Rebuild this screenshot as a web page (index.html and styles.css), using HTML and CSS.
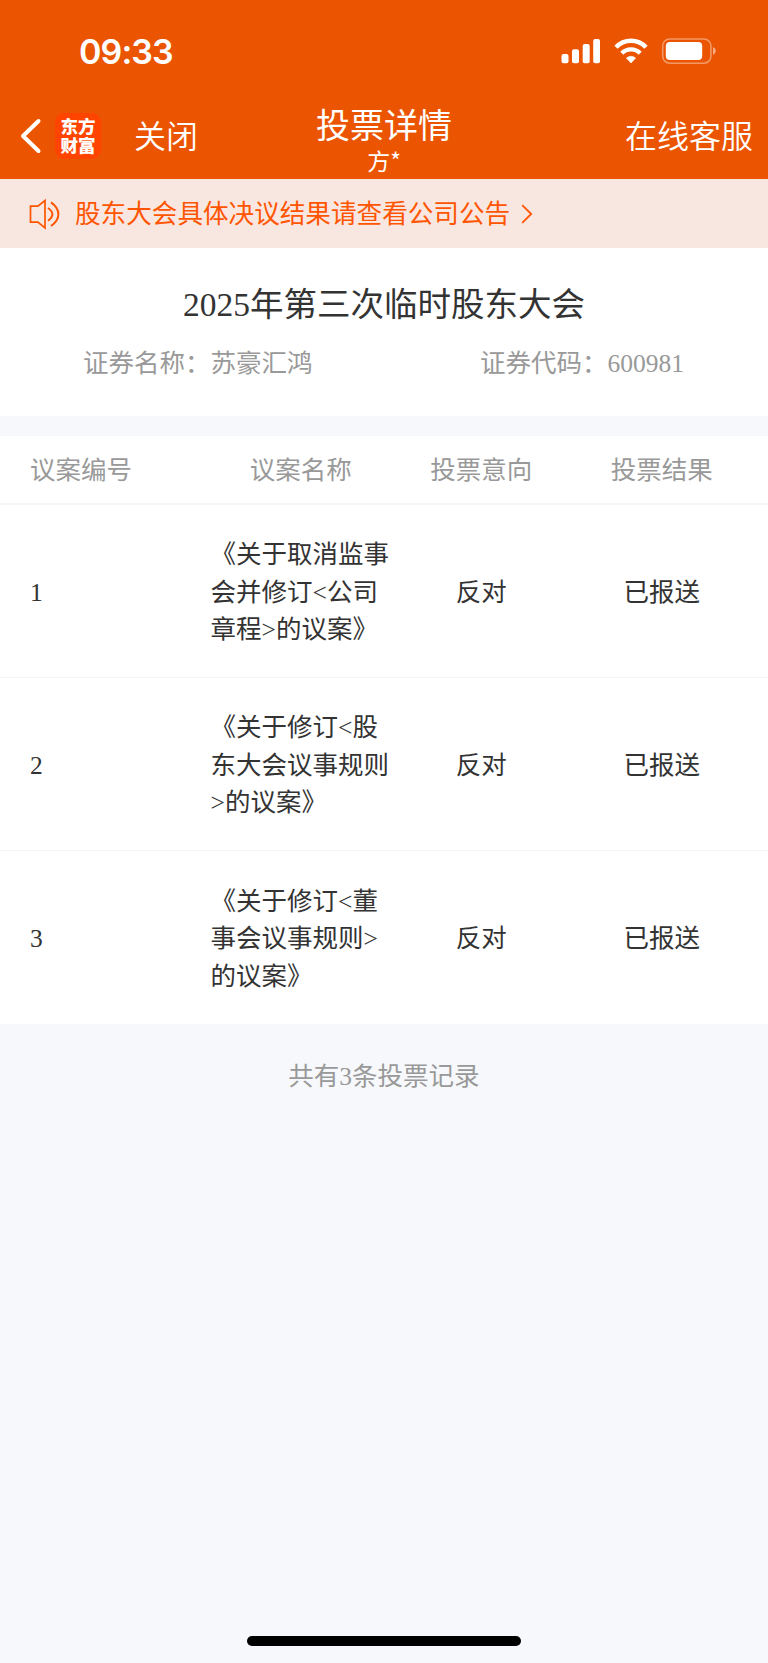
FILE: index.html
```html
<!DOCTYPE html>
<html lang="zh-CN">
<head>
<meta charset="utf-8">
<title>投票详情</title>
<link rel="stylesheet" href="styles.css">
</head>
<body>
<div class="screen">
  <header class="top">
    <div class="status">
      <span class="clock">09:33</span>
      <svg class="status-icons" width="156" height="28" viewBox="0 0 156 28">
        <g fill="#fff">
          <rect x="1.5" y="16" width="7" height="9.3" rx="2"/>
          <rect x="12" y="11.2" width="7" height="14.1" rx="2"/>
          <rect x="22.7" y="6" width="7" height="19.3" rx="2"/>
          <rect x="33.2" y="1" width="6.8" height="24.3" rx="2"/>
        </g>
        <g fill="none" stroke="#fff" stroke-width="4.4">
          <path d="M56 9.3A20.5 20.5 0 0 1 86 9.3"/>
          <path d="M61.8 15.3A12.8 12.8 0 0 1 80.2 15.3"/>
        </g>
        <path d="M66.4 20.1A6.8 6.8 0 0 1 75.6 20.1L71 25Z" fill="#fff" stroke="#fff" stroke-width=".6" stroke-linejoin="round"/>
        <rect x="102.7" y="1" width="48.2" height="24.2" rx="7" fill="none" stroke="#fff" stroke-opacity=".4" stroke-width="1.6"/>
        <rect x="105.8" y="4.1" width="36.4" height="18" rx="4" fill="#fff"/>
        <path d="M153 9Q155.8 10.2 155.8 13T153 17Z" fill="#fff" fill-opacity=".5"/>
      </svg>
    </div>
    <nav class="nav">
      <div class="nav-left">
        <svg class="back" width="22" height="36" viewBox="0 0 22 36"><path d="M18.5 3L3 18L18.5 33" fill="none" stroke="#fff" stroke-width="4" stroke-linecap="round" stroke-linejoin="round"/></svg>
        <div class="logo"><span>东方</span><span>财富</span></div>
        <span class="close">关闭</span>
      </div>
      <div class="nav-title"><h1>投票详情</h1><p>方*</p></div>
      <span class="service">在线客服</span>
    </nav>
  </header>

  <a class="notice">
    <svg class="speaker" width="32" height="32" viewBox="0 0 32 32"><g fill="none" stroke="#ff5500" stroke-width="1.7"><path d="M2.5 8.2H9.9L17 2.5V30L9.9 24.2H2.5Z"/><path d="M20 10Q24.4 13 24.4 16.2T20 22.7" stroke-width="2"/><path d="M23 4.4Q30.4 9.6 30.4 16.2T23 28" stroke-width="2"/></g></svg>
    <span>股东大会具体决议结果请查看公司公告</span>
    <svg class="more" width="12" height="20" viewBox="0 0 12 20"><path d="M1.2 1.2L10.2 10L1.2 18.8" fill="none" stroke="#ff5500" stroke-width="1.8"/></svg>
  </a>

  <section class="meeting">
    <h2>2025年第三次临时股东大会</h2>
    <div class="security"><span>证券名称：苏豪汇鸿</span><span>证券代码：600981</span></div>
  </section>

  <section class="votes">
    <div class="row head"><span class="no">议案编号</span><span>议案名称</span><span>投票意向</span><span>投票结果</span></div>
    <div class="row"><span class="no">1</span><span class="name">《关于取消监事<br>会并修订&lt;公司<br>章程&gt;的议案》</span><span>反对</span><span>已报送</span></div>
    <div class="row"><span class="no">2</span><span class="name">《关于修订&lt;股<br>东大会议事规则<br>&gt;的议案》</span><span>反对</span><span>已报送</span></div>
    <div class="row"><span class="no">3</span><span class="name">《关于修订&lt;董<br>事会议事规则&gt;<br>的议案》</span><span>反对</span><span>已报送</span></div>
  </section>

  <p class="total">共有3条投票记录</p>
  <div class="home-bar"></div>
</div>
</body>
</html>
```
FILE: styles.css
```css
* { box-sizing: border-box; }
body, h1, h2, p { margin: 0; font-weight: 400; }
body { font-family: "Liberation Serif", "Noto Sans CJK SC", serif; font-size: 25.5px; color: #333; }
svg { display: block; flex: none; }

.screen { width: 768px; height: 1663px; display: flex; flex-direction: column; background: #f6f8fb; overflow: hidden; }

.top { height: 179px; background: #eb5502; color: #fff; font-family: "Noto Sans CJK SC", sans-serif; }
.status { height: 94px; padding: 0 52.4px 0 79px; display: flex; justify-content: space-between; align-items: flex-start; }
.clock { font: 600 34px/40px Inter, sans-serif; letter-spacing: -0.9px; padding-top: 32px; }
.status-icons { margin-top: 38px; }

.nav { height: 85px; display: grid; grid-template-columns: 1fr auto 1fr; }
.nav-left { display: flex; align-items: center; padding: 0 0 1px 20px; height: 85px; }
.logo { width: 46px; height: 46px; margin-left: 13px; border-radius: 9px; background: #ff4400; display: flex; flex-direction: column; align-items: center; justify-content: center; font-size: 17.5px; line-height: 19px; font-weight: 900; padding-bottom: 2px; }
.close { margin: 0 0 4px 33px; font-size: 32px; line-height: 48px; font-weight: 350; }
.nav-title { text-align: center; }
.nav-title h1 { font-size: 34px; line-height: 40px; margin-top: 10px; }
.nav-title p { font-size: 23px; line-height: 30px; margin-top: 1px; }
.service { justify-self: end; align-self: center; padding: 0 15px 5px 0; font-size: 32px; line-height: 48px; font-weight: 350; }

.notice { height: 69px; padding-left: 28px; display: flex; align-items: center; background: #f8e7e0; color: #ff5500; line-height: 38px; }
.notice span { margin: 2px 0 0 15px; font-size: 25.6px; }
.more { margin-left: 11px; }

.meeting { height: 168px; background: #fff; padding-top: 32px; }
.meeting h2 { font-size: 33.5px; line-height: 50px; text-align: center; }
.security { margin-top: 15px; display: flex; justify-content: space-between; padding: 0 84px 0 83px; line-height: 38px; color: #999; }

.votes { margin-top: 19.6px; background: #fff; }
.row { height: 172.9px; padding: 3px 16px 0 30px; display: grid; grid-template-columns: repeat(4, 1fr); align-items: center; text-align: center; line-height: 37.4px; white-space: nowrap; border-bottom: 1px solid #f3f4f5; }
.row:last-child { border-bottom: 0; }
.row .no, .row .name { text-align: left; }
.head { height: 69.5px; padding-top: 2px; color: #999; border-bottom-width: 2px; }

.total { margin-top: 34px; line-height: 38px; text-align: center; color: #999; }
.home-bar { margin: auto auto 17px; width: 274px; height: 10px; border-radius: 5px; background: #000; }
```
